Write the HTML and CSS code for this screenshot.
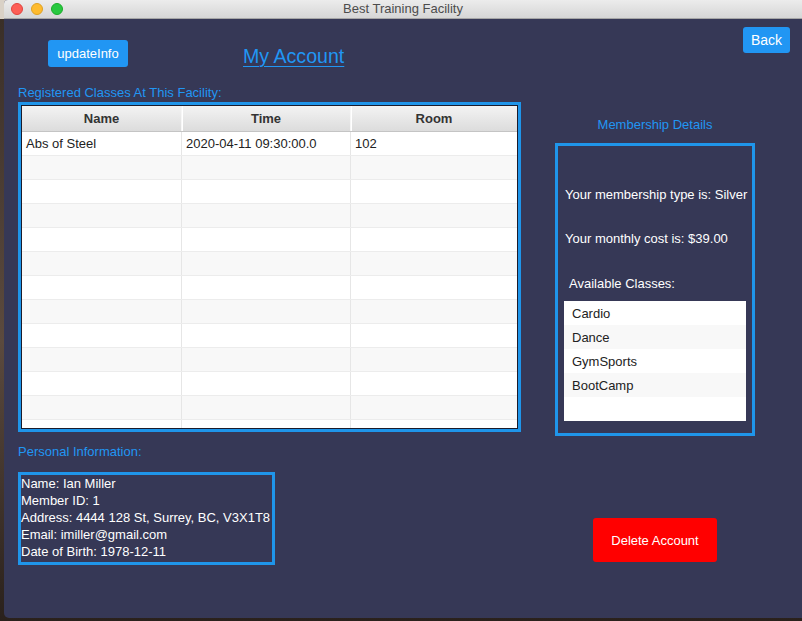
FILE: index.html
```html
<!DOCTYPE html>
<html>
<head>
<meta charset="utf-8">
<title>Best Training Facility</title>
<link rel="stylesheet" href="styles.css">
</head>
<body>
<div class="desktop">
  <div class="window">
    <div class="titlebar">
      <div class="lights">
        <span class="light red"></span>
        <span class="light yellow"></span>
        <span class="light green"></span>
      </div>
      <div class="title">Best Training Facility</div>
      <div></div>
    </div>
    <div class="content">
      <div class="topbar">
        <button class="btn btn-update">updateInfo</button>
        <a class="heading-link" href="#">My Account</a>
        <button class="btn btn-back">Back</button>
      </div>
      <div class="upper">
        <div class="classes-col">
          <div class="section-label">Registered Classes At This Facility:</div>
          <div class="table-frame">
            <div class="table-inner">
              <div class="thead">
                <div class="th">Name</div>
                <div class="th">Time</div>
                <div class="th">Room</div>
              </div>
              <div class="tr"><div class="td">Abs of Steel</div><div class="td">2020-04-11 09:30:00.0</div><div class="td">102</div></div>
              <div class="tr alt"><div class="td"></div><div class="td"></div><div class="td"></div></div>
              <div class="tr"><div class="td"></div><div class="td"></div><div class="td"></div></div>
              <div class="tr alt"><div class="td"></div><div class="td"></div><div class="td"></div></div>
              <div class="tr"><div class="td"></div><div class="td"></div><div class="td"></div></div>
              <div class="tr alt"><div class="td"></div><div class="td"></div><div class="td"></div></div>
              <div class="tr"><div class="td"></div><div class="td"></div><div class="td"></div></div>
              <div class="tr alt"><div class="td"></div><div class="td"></div><div class="td"></div></div>
              <div class="tr"><div class="td"></div><div class="td"></div><div class="td"></div></div>
              <div class="tr alt"><div class="td"></div><div class="td"></div><div class="td"></div></div>
              <div class="tr"><div class="td"></div><div class="td"></div><div class="td"></div></div>
              <div class="tr alt"><div class="td"></div><div class="td"></div><div class="td"></div></div>
              <div class="tr"><div class="td"></div><div class="td"></div><div class="td"></div></div>
            </div>
          </div>
        </div>
        <div class="membership-col">
          <div class="membership-title">Membership Details</div>
          <div class="membership-box">
            <p class="m-line m-type">Your membership type is: Silver</p>
            <p class="m-line m-cost">Your monthly cost is: $39.00</p>
            <p class="m-line m-avail">Available Classes:</p>
            <ul class="class-list">
              <li>Cardio</li>
              <li class="alt">Dance</li>
              <li>GymSports</li>
              <li class="alt">BootCamp</li>
            </ul>
          </div>
        </div>
      </div>
      <div class="lower">
        <div class="personal-col">
          <div class="section-label">Personal Information:</div>
          <div class="info-box">
            <div>Name: Ian Miller</div>
            <div>Member ID: 1</div>
            <div>Address: 4444 128 St, Surrey, BC, V3X1T8</div>
            <div>Email: imiller@gmail.com</div>
            <div>Date of Birth: 1978-12-11</div>
          </div>
        </div>
        <button class="btn btn-delete">Delete Account</button>
      </div>
    </div>
  </div>
</div>
</body>
</html>
```
FILE: styles.css
```css
html, body {
  margin: 0;
  padding: 0;
}
body {
  width: 802px;
  height: 621px;
  overflow: hidden;
  font-family: "Liberation Sans", Arial, sans-serif;
  font-size: 13px;
}
.desktop {
  display: flex;
  width: 802px;
  height: 621px;
  padding-left: 4px;
  box-sizing: border-box;
  background: linear-gradient(to bottom, #d9d1c6 0px, #d9d1c6 19px, #3a2f28 19px, #5b4a3e 55%, #2a211c 100%);
}
.window {
  width: 798px;
  height: 618px;
  display: flex;
  flex-direction: column;
  background: #363856;
  border-radius: 4px 0 0 5px;
  overflow: hidden;
}
.titlebar {
  height: 19px;
  box-sizing: border-box;
  border-bottom: 1px solid #a6a6a6;
  background: linear-gradient(to bottom, #ececec, #d6d6d6);
  display: grid;
  grid-template-columns: 1fr auto 1fr;
  align-items: center;
}
.lights {
  display: flex;
  gap: 8px;
  padding-left: 7px;
}
.light {
  width: 12px;
  height: 12px;
  border-radius: 50%;
  box-sizing: border-box;
}
.red { background: #fd5e56; border: 1px solid #e0443e; }
.yellow { background: #febb2e; border: 1px solid #dea123; }
.green { background: #28c840; border: 1px solid #1aab29; }
.title {
  color: #4c4c4c;
  font-size: 13px;
  line-height: 18px;
}
.content {
  flex: 1;
  display: flex;
  flex-direction: column;
}
.topbar {
  height: 64px;
  display: flex;
  align-items: flex-start;
  padding-left: 44px;
  padding-right: 12px;
}
.btn {
  font-family: "Liberation Sans", Arial, sans-serif;
  font-size: 13px;
  color: #ffffff;
  border: none;
  border-radius: 3px;
  padding: 0;
  cursor: pointer;
}
.btn-update {
  margin-top: 21px;
  width: 80px;
  height: 27px;
  background: #2196f3;
}
.heading-link {
  margin-top: 26px;
  margin-left: 115px;
  font-size: 19.6px;
  line-height: 23px;
  color: #2196f3;
  text-decoration: underline;
  text-decoration-thickness: 1px;
  text-underline-offset: 3px;
}
.btn-back {
  margin-left: auto;
  margin-top: 8px;
  width: 47px;
  height: 26px;
  background: #2196f3;
  font-size: 14px;
}
.upper {
  display: flex;
  align-items: flex-start;
  padding-left: 14px;
  gap: 34px;
}
.section-label {
  color: #2196f3;
  font-size: 13px;
  line-height: 16px;
}
.classes-col {
  padding-top: 2px;
  display: flex;
  flex-direction: column;
  gap: 1px;
}
.table-frame {
  width: 503px;
  height: 330px;
  box-sizing: border-box;
  border: 3px solid #1f95ea;
}
.table-inner {
  height: 100%;
  box-sizing: border-box;
  border: 1px solid #1b1c2c;
  background: #ffffff;
  overflow: hidden;
}
.thead, .tr {
  display: grid;
  grid-template-columns: 159px 169px 1fr;
}
.thead {
  height: 26px;
  box-sizing: border-box;
  border-bottom: 1px solid #c4c4c4;
  background: linear-gradient(to bottom, #f3f3f3, #dcdcdc);
}
.th {
  font-weight: bold;
  color: #333333;
  text-align: center;
  line-height: 25px;
  border-left: 1px solid #f6f6f6;
  box-shadow: inset 1px 0 0 #ffffff;
}
.th:first-child {
  border-left: none;
  box-shadow: none;
}
.tr {
  height: 24px;
  box-sizing: border-box;
  border-bottom: 1px solid #ececec;
  background: #ffffff;
}
.tr.alt {
  background: #f8f8f8;
}
.td {
  color: #222222;
  line-height: 23px;
  padding-left: 4px;
  border-left: 1px solid #e6e6e6;
  white-space: nowrap;
}
.td:first-child {
  border-left: none;
}
.membership-col {
  width: 200px;
  margin-top: 34px;
  display: flex;
  flex-direction: column;
  gap: 10px;
}
.membership-title {
  color: #2196f3;
  text-align: center;
  line-height: 16px;
}
.membership-box {
  height: 293px;
  box-sizing: border-box;
  border: 3px solid #1f95ea;
  display: flex;
  flex-direction: column;
}
.m-line {
  margin: 0;
  color: #ffffff;
  line-height: 16px;
  white-space: nowrap;
}
.m-type {
  margin-top: 41px;
  padding-left: 7px;
}
.m-cost {
  margin-top: 28px;
  padding-left: 7px;
}
.m-avail {
  margin-top: 29px;
  padding-left: 11px;
}
.class-list {
  list-style: none;
  margin: 9px 0 0 6px;
  padding: 0;
  width: 182px;
  height: 120px;
  background: #ffffff;
}
.class-list li {
  height: 24px;
  line-height: 26px;
  padding-left: 8px;
  color: #222222;
  background: #ffffff;
}
.class-list li.alt {
  background: #f8f8f8;
}
.lower {
  display: flex;
  align-items: flex-start;
  padding-left: 14px;
  margin-top: 8px;
}
.personal-col {
  display: flex;
  flex-direction: column;
  gap: 12px;
}
.info-box {
  width: 257px;
  height: 93px;
  box-sizing: border-box;
  border: 3px solid #1f95ea;
  color: #ffffff;
  line-height: 17px;
  white-space: nowrap;
}
.btn-delete {
  margin-left: 318px;
  margin-top: 74px;
  width: 124px;
  height: 44px;
  background: #ff0000;
}
```
